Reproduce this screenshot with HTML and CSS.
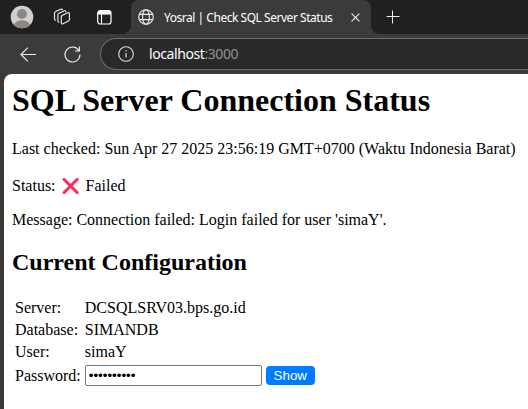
FILE: index.html
```html
<!DOCTYPE html>
<html lang="en">
<head>
<meta charset="utf-8">
<title>Yosral | Check SQL Server Status</title>
<link rel="stylesheet" href="styles.css">
</head>
<body>
<div class="browser">
  <div class="tabstrip">
    <svg class="avatar" width="24" height="24" viewBox="0 0 24 24"><defs><clipPath id="c"><circle cx="12" cy="12" r="11.3"/></clipPath></defs><circle cx="12" cy="12" r="11.3" fill="#d2d0ce"/><g fill="#8c8885" clip-path="url(#c)"><circle cx="12" cy="9" r="5"/><ellipse cx="12" cy="20.5" rx="8" ry="5.3"/></g></svg>
    <svg class="workspaces" width="18" height="18" viewBox="0 0 18 18" fill="none" stroke="#f0f0f0" stroke-width="1.1" stroke-linejoin="round" stroke-linecap="round"><path d="M9.300 7.200 14.800 4.700Q16.400 4.200 16.400 5.700V11.500Q16.400 12.600 15.400 13.100L10 15.800Q8.300 16.500 8.300 14.800V8.700Q8.300 7.600 9.300 7.200ZM6 14.200Q4.900 14 4.900 12.700V7Q4.900 5.700 6 5.200L11 2.900Q12.500 2.400 12.900 3.500M2.700 12.200Q1.500 12 1.500 10.700V5.300Q1.500 4 2.600 3.500L7.600 1.300Q9 .8 9.500 1.800"/></svg>
    <svg class="tabactions" width="15" height="15" viewBox="0 0 15 15" fill="none" stroke="#fff"><rect x=".7" y=".7" width="13.300" height="13.300" rx="2.500" stroke-width="1.200"/><path d="M1 2.800H14" stroke-width="3.500"/><path d="M4.500 4V14" stroke-width="1.100"/></svg>
    <div class="tab">
      <svg class="globe" width="16" height="16" viewBox="0 0 16 16" fill="none" stroke="#eee" stroke-width="1.100"><circle cx="8" cy="8" r="7.300"/><ellipse cx="8" cy="8" rx="3.400" ry="7.300"/><path d="M1.400 5.400H14.600M1.400 10.600H14.600"/></svg>
      <span class="title">Yosral | Check SQL Server Status</span>
      <svg class="close" width="9" height="9" viewBox="0 0 9 9"><path d="M.6.6 8.400 8.400M8.400.6.6 8.400" stroke="#e8e8e8" stroke-width="1.200"/></svg>
    </div>
    <svg class="newtab" width="14" height="14" viewBox="0 0 14 14"><path d="M.5 6.500H13.500M6.500.5V13.500" stroke="#eee"/></svg>
  </div>
  <div class="toolbar">
    <svg class="back" width="17" height="15" viewBox="0 0 17 15" fill="none" stroke="#f0f0f0" stroke-width="1.100"><path d="M16 7.500H1M7.800.7 1 7.500 7.800 14.300"/></svg>
    <svg class="reload" width="17" height="17" viewBox="0 0 17 17" fill="none" stroke="#f0f0f0" stroke-width="1.100"><path d="M16 8.500A7.500 7.500 0 1 1 14.900 4.600M15.400.5V5H11"/></svg>
    <div class="address">
      <svg class="info" width="16" height="16" viewBox="0 0 16 16" fill="none" stroke="#ddd" stroke-width="1.100"><circle cx="8" cy="8" r="7.300"/><path d="M8 7V11.500M8 4.300V5.500" stroke-width="1.200"/></svg>
      <span class="url">localhost<span class="port">:3000</span></span>
    </div>
  </div>
</div>
<main class="page">
  <h1>SQL Server Connection Status</h1>
  <p>Last checked: Sun Apr 27 2025 23:56:19 GMT+0700 (Waktu Indonesia Barat)</p>
  <p class="status">Status: <svg class="cross" width="22" height="16" viewBox="0 0 22 16"><path d="M4 1.400 17.200 14.600M17.200 1.400 4 14.600" stroke="#f8315c" stroke-width="2.900" stroke-linecap="round"/></svg> Failed</p>
  <p>Message: Connection failed: Login failed for user 'simaY'.</p>
  <h2>Current Configuration</h2>
  <table>
    <tr><td>Server:</td><td>DCSQLSRV03.bps.go.id</td></tr>
    <tr><td>Database:</td><td>SIMANDB</td></tr>
    <tr><td>User:</td><td>simaY</td></tr>
    <tr><td>Password:</td><td><div class="field"><input type="password" value="0000000000" readonly><button type="button">Show</button></div></td></tr>
  </table>
</main>
</body>
</html>
```
FILE: styles.css
```css
* { box-sizing: border-box; }
html, body { height: 100%; }
body {
  margin: 0;
  display: flex;
  flex-direction: column;
  overflow: hidden;
  background: #3b3a39;
  font: 16px "Liberation Serif", "Times New Roman", serif;
  color: #000;
}
svg { flex: none; }
.browser { flex: none; font-family: "Noto Sans", "Open Sans", sans-serif; color: #fff; }
.tabstrip { display: flex; height: 34px; background: #202020; }
.avatar { margin: 5px 0 0 10px; }
.workspaces { margin: 8px 0 0 19px; }
.tabactions { margin: 10px 0 0 26px; }
.tab {
  position: relative;
  display: flex;
  flex: none;
  align-items: center;
  width: 240px;
  margin-left: 19px;
  padding: 0 11px 0 7px;
  background: #3b3b3b;
  border-radius: 8px 8px 0 0;
}
.tab::before, .tab::after {
  content: "";
  position: absolute;
  bottom: 0;
  width: 8px;
  height: 8px;
}
.tab::before { left: -8px; background: radial-gradient(circle at 0 0, transparent 7.5px, #3b3b3b 8px); }
.tab::after { right: -8px; background: radial-gradient(circle at 100% 0, transparent 7.5px, #3b3b3b 8px); }
.title { flex: none; margin-left: 10px; font-size: 12px; letter-spacing: -0.47px; white-space: nowrap; }
.close { margin: 1px 0 0 auto; }
.newtab { margin: 10px 0 0 15px; }
.toolbar { display: flex; align-items: center; height: 40px; background: #3b3b3b; }
.back { margin-left: 20px; }
.reload { margin-left: 27px; }
.address {
  display: flex;
  flex: 1;
  align-items: center;
  height: 32px;
  margin-left: 19px;
  padding-left: 17px;
  background: #292929;
  border: 1px solid #6e6e6e;
  border-right: 0;
  border-radius: 16px 0 0 16px;
}
.url { margin: -1px 0 0 15px; font-size: 14px; letter-spacing: -0.42px; }
.port { color: #919191; }
.page {
  flex: 1;
  margin-left: 4px;
  padding: 8px 0 0 8px;
  background: #fff;
  border-top-left-radius: 8px;
  white-space: nowrap;
}
h1 { margin: 0 0 21px; font-size: 32px; line-height: 37px; }
h2 { margin: 20px 0; font-size: 24px; line-height: 27px; }
p { margin: 0 0 16px; line-height: 18px; }
.status { margin: 17px 0 15px; line-height: 21px; }
.cross { vertical-align: -3px; }
table { border-spacing: 2px; line-height: 18px; }
td { padding: 1px; }
.field { display: flex; align-items: center; gap: 4px; }
input {
  width: 177px;
  height: 21px;
  margin: 0;
  padding: 1px 2px 1px 3px;
  border: 1px solid #767676;
  border-radius: 2px;
  outline: 0;
  background: #fff;
  color: #000;
  font: 13.333px "Liberation Sans", Arial, sans-serif;
}
button {
  width: 49px;
  height: 19px;
  padding: 0;
  border: 0;
  border-radius: 4px;
  background: #007bff;
  color: #fff;
  font: 13.333px "Liberation Sans", Arial, sans-serif;
}
```
